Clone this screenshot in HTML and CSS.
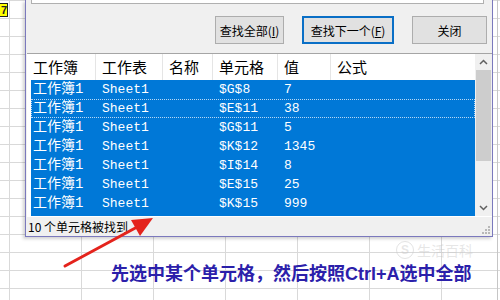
FILE: index.html
```html
<!DOCTYPE html>
<html lang="zh-CN">
<head>
    <meta charset="UTF-8">
    <title>查找和替换</title>
    <link rel="stylesheet" href="styles.css">
</head>
<body>
    <div class="cell-mark">7</div>

    <div class="dialog">
        <div class="find-input"></div>

        <div class="actions">
            <button class="btn btn-all">查找全部(<u>I</u>)</button>
            <button class="btn btn-next">查找下一个(<u>F</u>)</button>
            <button class="btn btn-close">关闭</button>
        </div>

        <div class="results">
            <div class="table">
                <div class="row head">
                    <span>工作簿</span>
                    <span>工作表</span>
                    <span>名称</span>
                    <span>单元格</span>
                    <span>值</span>
                    <span>公式</span>
                </div>
                <div class="row sel"><span>工作簿1</span><span>Sheet1</span><span></span><span>$G$8</span><span>7</span><span></span></div>
                <div class="row sel focus"><span>工作簿1</span><span>Sheet1</span><span></span><span>$E$11</span><span>38</span><span></span></div>
                <div class="row sel"><span>工作簿1</span><span>Sheet1</span><span></span><span>$G$11</span><span>5</span><span></span></div>
                <div class="row sel"><span>工作簿1</span><span>Sheet1</span><span></span><span>$K$12</span><span>1345</span><span></span></div>
                <div class="row sel"><span>工作簿1</span><span>Sheet1</span><span></span><span>$I$14</span><span>8</span><span></span></div>
                <div class="row sel"><span>工作簿1</span><span>Sheet1</span><span></span><span>$E$15</span><span>25</span><span></span></div>
                <div class="row sel"><span>工作簿1</span><span>Sheet1</span><span></span><span>$K$15</span><span>999</span><span></span></div>
                <div class="row sel"></div>
            </div>
            <div class="scrollbar">
                <div class="arrow">
                    <svg width="9" height="6" viewBox="0 0 9 6"><polyline points="1,5 4.5,1.5 8,5" fill="none" stroke="#606060" stroke-width="1.5"/></svg>
                </div>
                <div class="thumb"></div>
                <div class="arrow down">
                    <svg width="9" height="6" viewBox="0 0 9 6"><polyline points="1,1 4.5,4.5 8,1" fill="none" stroke="#606060" stroke-width="1.5"/></svg>
                </div>
            </div>
        </div>

        <div class="status">10 个单元格被找到</div>

        <svg class="grip" width="8" height="8" viewBox="0 0 8 8" fill="#b8b8b8">
            <rect x="6" y="0" width="2" height="2"/>
            <rect x="3" y="3" width="2" height="2"/><rect x="6" y="3" width="2" height="2"/>
            <rect x="0" y="6" width="2" height="2"/><rect x="3" y="6" width="2" height="2"/><rect x="6" y="6" width="2" height="2"/>
        </svg>
    </div>

    <svg class="pointer" width="500" height="300" viewBox="0 0 500 300">
        <line x1="65" y1="266" x2="139" y2="226" stroke="#e4231c" stroke-width="3" stroke-linecap="round"/>
        <polygon points="153,218 131,220 140,236" fill="#e4231c"/>
    </svg>

    <div class="watermark"><span class="wm-logo">S</span>生活百科</div>

    <p class="note">先选中某个单元格，然后按照Ctrl+A选中全部</p>
</body>
</html>
```

FILE: styles.css
```css
body {
    margin: 0;
    width: 500px;
    height: 300px;
    overflow: hidden;
    position: relative;
    font-family: "Noto Sans CJK SC", sans-serif;
    background-color: #fff;
    background-image:
        linear-gradient(to right, transparent 497px, #c6c6c6 497px, #c6c6c6 498px, transparent 498px),
        linear-gradient(to right, #d9d9d9 1px, transparent 1px),
        linear-gradient(to bottom, #d9d9d9 1px, transparent 1px);
    background-size: 500px 300px, 72px 18px, 72px 18px;
    background-position: 0 0, 9px 0, 0 0;
}

.cell-mark {
    position: absolute;
    left: -2px;
    top: 3px;
    width: 8px;
    height: 12px;
    background: #ffff00;
    border: 1px solid #222;
    font: bold 11px/12px "Liberation Sans", sans-serif;
    color: #222;
    text-align: right;
}

/* find dialog */
.dialog {
    position: absolute;
    left: 25px;
    top: 0;
    width: 468px;
    height: 237px;
    box-sizing: border-box;
    background: #f0f0f0;
    border: 1px solid #7b79bd;
    border-top: none;
    box-shadow: -2px 2px 3px rgba(0,0,0,0.18);
    display: flex;
    flex-direction: column;
}
.find-input {
    height: 3px;
    margin: 0 8px 0 5px;
    background: #fff;
    border: 1px solid #b0b0b0;
    border-top: none;
}
.actions {
    display: flex;
    justify-content: flex-end;
    gap: 18px;
    margin-top: 12px;
    padding-right: 5px;
    height: 28px;
}
.btn {
    height: 28px;
    padding: 0;
    background: #e1e1e1;
    border: 1px solid #adadad;
    font-family: "Noto Sans CJK SC", sans-serif;
    font-size: 12px;
    color: #000;
}
.btn-all { width: 69px; }
.btn-next { width: 92px; border: 2px solid #0a6fc6; }
.btn-close { width: 75px; }

.results {
    margin-top: 9px;
    margin-left: 1px;
    height: 162px;
    border-top: 1px solid #a5a5a5;
    border-bottom: 1px solid #fff;
    background: #fff;
    display: flex;
}
.table {
    flex: 1;
    padding-left: 4px;
    overflow: hidden;
}
.row {
    display: grid;
    grid-template-columns: 65px 67px 50px 65px 53px 1fr;
    height: 19px;
    box-sizing: border-box;
    font-family: "Liberation Mono", "Noto Sans CJK SC", monospace;
    font-size: 13px;
    line-height: 19px;
    white-space: nowrap;
}
.row span {
    padding-left: 6px;
    overflow: hidden;
}
.row span:first-child {
    padding-left: 2px;
    font-size: 14px;
}
.head {
    height: 26px;
    line-height: 26px;
    font-family: "Noto Sans CJK SC", sans-serif;
    font-size: 15px;
    color: #000;
}
.head span { border-right: 1px solid #e5e5e5; }
.head span:first-child { font-size: 15px; }
.head span:last-child { border-right: none; }
.sel {
    background: #0078d7;
    color: #fff;
}
.focus {
    outline: 1px dotted #b9d7f3;
    outline-offset: -1px;
}

.scrollbar {
    width: 17px;
    background: #f0f0f0;
    display: flex;
    flex-direction: column;
}
.arrow {
    height: 16px;
    display: flex;
    align-items: center;
    justify-content: center;
}
.thumb {
    height: 91px;
    margin: 0 1px;
    background: #cdcdcd;
}
.down { margin-top: auto; }

.status {
    height: 19px;
    padding-left: 2px;
    font-size: 12px;
    line-height: 19px;
    color: #000;
}
.grip {
    position: absolute;
    right: 2px;
    bottom: 2px;
}

/* annotation */
.pointer {
    position: absolute;
    left: 0;
    top: 0;
}
.note {
    position: absolute;
    left: 111px;
    top: 259px;
    margin: 0;
    font-family: "Liberation Sans", "Noto Sans CJK SC", sans-serif;
    font-size: 18px;
    font-weight: bold;
    color: #2b20aa;
    white-space: nowrap;
}
.watermark {
    position: absolute;
    left: 396px;
    top: 241px;
    font-size: 14px;
    line-height: 18px;
    color: rgba(200,200,200,0.45);
    display: flex;
    align-items: center;
    gap: 3px;
}
.wm-logo {
    width: 16px;
    height: 16px;
    border-radius: 50%;
    border: 1px solid rgba(200,200,200,0.5);
    font: bold 12px/16px "Liberation Sans", sans-serif;
    text-align: center;
}
```
